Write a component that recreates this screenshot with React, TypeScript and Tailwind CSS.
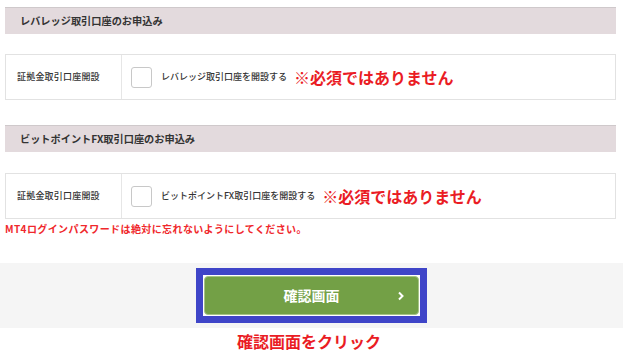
const font = { fontFamily: '"Noto Sans CJK JP", "Noto Sans", sans-serif' };

function SectionHeader({ title }: { title: string }) {
  return (
    <div className="flex h-[27px] items-center border-t border-[#cfc9cb] bg-[#e3dadd] pl-[15px] text-[10.2px] font-bold text-[#333]">
      {title}
    </div>
  );
}

function OpenRow({ label, note }: { label: string; note: string }) {
  return (
    <div className="flex h-[46px] border border-[#e2e2e2]">
      <div className="flex w-[116px] items-center border-r border-[#e6e6e6] pl-[11px] text-[9px] font-medium tracking-[0.2px] text-[#333]">
        {label}
      </div>
      <div className="flex items-center pl-[9px]">
        <span className="h-[21px] w-[21px] rounded-[3px] border border-[#c8c8c8] bg-white" />
        <span className="ml-[9px] text-[9px] font-medium text-[#333]">{note}</span>
        <span className="ml-[7px] text-[16px] font-bold text-[#ea1c24]">※必須ではありません</span>
      </div>
    </div>
  );
}

export default function App() {
  return (
    <div className="h-[364px] w-[623px] bg-white" style={font}>
      <div className="px-[5px] pr-[7px] pt-[7px]">
        <SectionHeader title="レバレッジ取引口座のお申込み" />
        <div className="mt-[20px]">
          <OpenRow label="証拠金取引口座開設" note="レバレッジ取引口座を開設する" />
        </div>
        <div className="mt-[25px]">
          <SectionHeader title="ビットポイントFX取引口座のお申込み" />
        </div>
        <div className="mt-[21px]">
          <OpenRow label="証拠金取引口座開設" note="ビットポイントFX取引口座を開設する" />
        </div>
        <p className="mt-[2px] text-[10px] font-bold tracking-[0.4px] text-[#f0282c]">
          MT4ログインパスワードは絶対に忘れないようにしてください。
        </p>
      </div>
      <div className="mt-[27px] flex h-[65px] items-center justify-center bg-[#f5f5f5]">
        <div className="border-[7px] border-[#3f45c8] bg-white p-px">
          <button
            type="button"
            className="relative flex h-[39px] w-[215px] items-center justify-center rounded-[4px] border border-[#a6c487] bg-[#73a046] text-[14px] font-bold text-white"
          >
            確認画面
            <svg
              className="absolute right-[13px] top-1/2 -translate-y-1/2"
              width="8"
              height="10"
              viewBox="0 0 8 10"
              fill="none"
            >
              <path d="M2 1.5 L5.5 5 L2 8.5" stroke="white" strokeWidth="2" />
            </svg>
          </button>
        </div>
      </div>
      <p className="mt-[1px] pr-[5px] text-center text-[16px] font-bold text-[#ea1c24]">確認画面をクリック</p>
    </div>
  );
}
